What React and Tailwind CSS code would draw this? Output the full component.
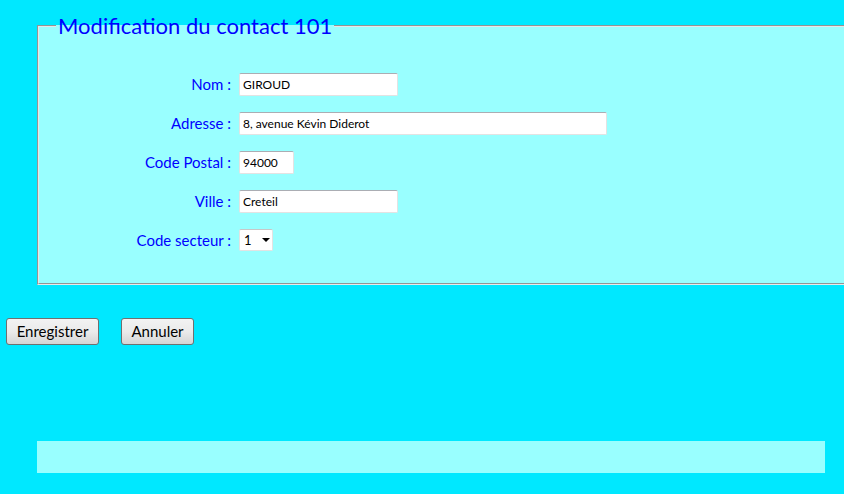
import React, { useState } from 'react';

const rows = [
	{ label: 'Nom :', value: 'GIROUD', width: 'w-[159px]' },
	{ label: 'Adresse :', value: '8, avenue Kévin Diderot', width: 'w-[368px]' },
	{ label: 'Code Postal :', value: '94000', width: 'w-[55px]' },
	{ label: 'Ville :', value: 'Creteil', width: 'w-[159px]' }
];

const App = () => {
	const [form, setForm] = useState(rows.map(r => r.value));
	const [secteur, setSecteur] = useState('1');

	return (
		<div className="w-[844px] h-[494px] overflow-hidden bg-[#00e8ff] font-['Lato','Liberation_Sans',sans-serif]">
			<fieldset className="ml-[37px] mt-[12px] w-[860px] border-2 [border-style:groove] border-[#e8e8e8] bg-[#99ffff] pt-[33px] pb-[31px]">
				<legend className="ml-[17px] px-[2px] text-[22px] leading-[28px] text-[#0000ff]">
					Modification du contact 101
				</legend>
				<div className="grid grid-cols-[192px_auto] gap-x-[8px] gap-y-[16px] items-center">
					{rows.map((r, i) => (
						<React.Fragment key={r.label}>
							<label className="text-right text-[15px] text-[#0000ff]">{r.label}</label>
							<input
								className={`${r.width} h-[23px] bg-white border border-[#e3e3e3] border-t-[#abadb3] rounded-[2px] px-[3px] text-[12px] text-black outline-none`}
								type="text"
								value={form[i]}
								onChange={e => {
									const next = [...form];
									next[i] = e.target.value;
									setForm(next);
								}}
							/>
						</React.Fragment>
					))}
					<label className="text-right text-[15px] text-[#0000ff]">Code secteur :</label>
					<div className="w-[34px] h-[22px] flex items-center bg-white border border-[#e3e3e3] border-t-[#c8c8c8] rounded-[2px]">
						<select
							className="appearance-none bg-transparent w-[20px] pl-[4px] text-[13px] text-black outline-none"
							value={secteur}
							onChange={e => setSecteur(e.target.value)}
						>
							<option value="1">1</option>
							<option value="2">2</option>
							<option value="3">3</option>
						</select>
						<svg width="8" height="4" viewBox="0 0 8 4" className="ml-[2px]">
							<path d="M0 0 L8 0 L4 4 Z" fill="#000" />
						</svg>
					</div>
				</div>
			</fieldset>

			<div className="mt-[33px] flex gap-[22px] pl-[6px]">
				<button className="w-[93px] h-[27px] border border-[#707070] rounded-[3px] bg-gradient-to-b from-[#f2f2f2] via-[#ebebeb] to-[#d5d5d5] text-[15px] text-black">
					Enregistrer
				</button>
				<button className="w-[73px] h-[27px] border border-[#707070] rounded-[3px] bg-gradient-to-b from-[#f2f2f2] via-[#ebebeb] to-[#d5d5d5] text-[15px] text-black">
					Annuler
				</button>
			</div>

			<div className="ml-[37px] mt-[96px] w-[788px] h-[32px] bg-[#99ffff]" />
		</div>
	);
};

export default App;
